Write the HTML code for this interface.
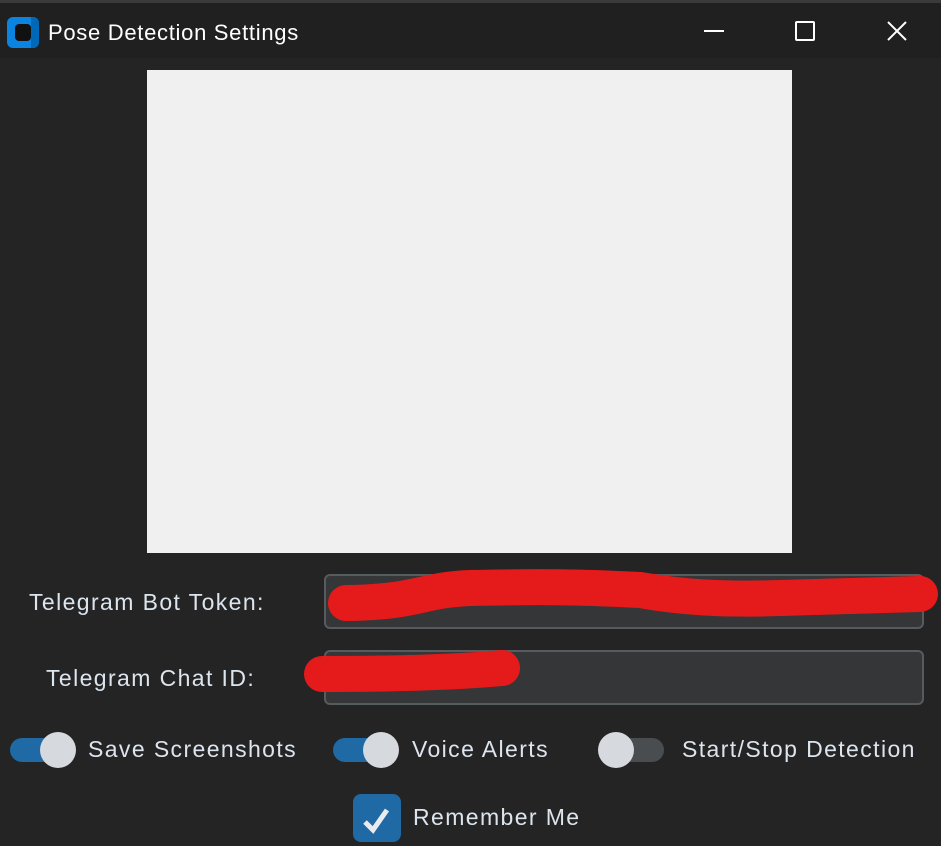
<!DOCTYPE html>
<html><head><meta charset="utf-8"><style>
body{margin:0;width:941px;height:846px;background:#242424;position:relative;overflow:hidden;font-family:"Liberation Sans",sans-serif;color:#dce4ee}
.a{position:absolute}
.t{font-size:23px;letter-spacing:1.4px;white-space:nowrap}
.tog{position:absolute;width:54px;height:24px;border-radius:12px}
.knob{position:absolute;width:36px;height:36px;border-radius:50%;background:#d6d9de;top:-6px}
</style></head><body>
<div class="a" style="left:0;top:0;width:941px;height:3px;background:#3a3a3a"></div>
<div class="a" style="left:0;top:3px;width:941px;height:55px;background:#202020"></div>
<div class="a" style="left:7px;top:17px;width:32px;height:31px;border-radius:6px;background:#0a84e0"></div>
<div class="a" style="left:15px;top:24px;width:16px;height:17px;border-radius:4px;background:#111"></div>
<div class="a" style="left:31px;top:17px;width:8px;height:31px;border-radius:0 6px 6px 0;background:#0068b8"></div>
<div class="a" style="left:48px;top:20px;font-size:22px;letter-spacing:0.7px;color:#fff">Pose Detection Settings</div>
<div class="a" style="left:704px;top:30px;width:20px;height:2px;background:#fff"></div>
<div class="a" style="left:795px;top:21px;width:16px;height:16px;border:2px solid #fff;border-radius:2px"></div>
<svg class="a" style="left:886px;top:20px" width="22" height="22"><path d="M2 2L20 20M20 2L2 20" stroke="#fff" stroke-width="2"/></svg>
<div class="a" style="left:147px;top:70px;width:645px;height:483px;background:#f0f0f0"></div>
<div class="a t" style="left:29px;top:589px">Telegram Bot Token:</div>
<div class="a t" style="left:46px;top:665px">Telegram Chat ID:</div>
<div class="a" style="left:324px;top:574px;width:596px;height:51px;border:2px solid #565b5e;border-radius:6px;background:#343638"></div>
<div class="a" style="left:324px;top:650px;width:596px;height:51px;border:2px solid #565b5e;border-radius:6px;background:#343638"></div>
<svg class="a" style="left:0;top:0" width="941" height="846"><path d="M346 603C420 602 420 590 470 588C560 586 600 588 640 590C680 597 720 600 780 598L920 594" stroke="#e51b1b" stroke-width="36" stroke-linecap="round" fill="none"/><path d="M322 674C400 674 460 672 502 668" stroke="#e51b1b" stroke-width="36" stroke-linecap="round" fill="none"/></svg>
<div class="tog" style="left:10px;top:738px;background:#1f6aa5"><div class="knob" style="left:30px"></div></div>
<div class="a t" style="left:88px;top:736px">Save Screenshots</div>
<div class="tog" style="left:333px;top:738px;background:#1f6aa5"><div class="knob" style="left:30px"></div></div>
<div class="a t" style="left:412px;top:736px">Voice Alerts</div>
<div class="tog" style="left:610px;top:738px;background:#4a4d50"><div class="knob" style="left:-12px"></div></div>
<div class="a t" style="left:682px;top:736px">Start/Stop Detection</div>
<div class="a" style="left:353px;top:794px;width:48px;height:48px;border-radius:8px;background:#1f6aa5"></div>
<svg class="a" style="left:353px;top:794px" width="48" height="48"><path d="M12 28L20 36L34 16" stroke="#e8ecf0" stroke-width="5" fill="none"/></svg>
<div class="a t" style="left:413px;top:804px">Remember Me</div>
</body></html>
